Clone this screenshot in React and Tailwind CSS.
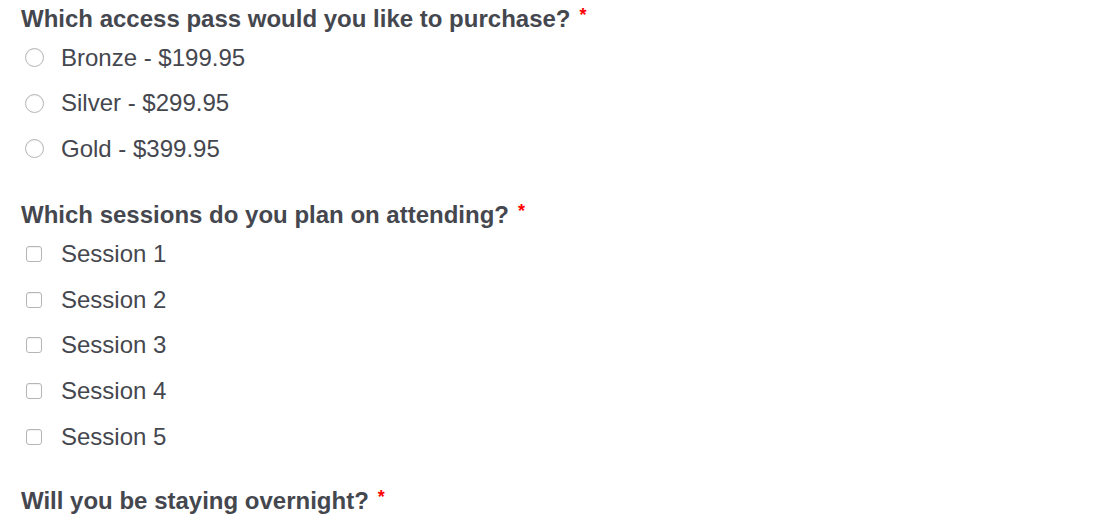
const sessions = ['Session 1', 'Session 2', 'Session 3', 'Session 4', 'Session 5'];
const passes = ['Bronze - $199.95', 'Silver - $299.95', 'Gold - $399.95'];

const Label = ({ children }) => (
    <div className="flex items-start h-[35px] text-[24px] leading-[38px] font-bold text-[#45474f]">
        {children}
        <span className="ml-[9px] text-[#ff0000] text-[18px] leading-[30px] font-bold">*</span>
    </div>
);

export default function App() {
    return (
        <div className="w-[1116px] h-[528px] bg-white overflow-hidden pl-[21px] text-[#45474f]" style={{ fontFamily: '"Liberation Sans", Arial, sans-serif' }}>
            <Label>Which access pass would you like to purchase?</Label>
            <div className="flex flex-col">
                {passes.map((p) => (
                    <label key={p} className="flex items-center h-[45.5px]">
                        <span className="ml-[4px] w-[19px] h-[19px] rounded-full border border-[#b5b5b5] bg-white shadow-[inset_0_1px_1px_rgba(0,0,0,0.06)]" />
                        <span className="ml-[17px] text-[24px] leading-none">{p}</span>
                    </label>
                ))}
            </div>
            <div className="h-[24.5px]" />
            <Label>Which sessions do you plan on attending?</Label>
            <div className="flex flex-col">
                {sessions.map((s) => (
                    <label key={s} className="flex items-center h-[45.75px]">
                        <span className="ml-[5px] w-[16px] h-[16px] rounded-[3px] border border-[#b5b5b5] bg-white shadow-[inset_0_1px_1px_rgba(0,0,0,0.06)]" />
                        <span className="ml-[19px] text-[24px] leading-none">{s}</span>
                    </label>
                ))}
            </div>
            <div className="h-[22.3px]" />
            <Label>Will you be staying overnight?</Label>
        </div>
    );
}
